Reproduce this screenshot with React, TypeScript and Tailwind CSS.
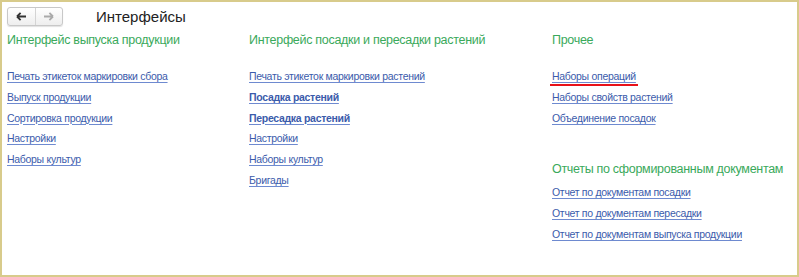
const font = { fontFamily: '"Liberation Sans", Arial, sans-serif' };

type Link = { label: string; bold?: boolean; marked?: boolean };

function LinkItem({ label, bold, marked }: Link) {
  return (
    <div className="relative h-[20.8px] leading-[20.8px]">
      <a href="#" className={`text-[10.5px] tracking-[-0.3px] text-[#3b5bab] underline underline-offset-2 decoration-[#6e8ad0] ${bold ? 'font-bold' : ''}`}>
        {label}
      </a>
      {marked && <div className="absolute left-[-2px] top-[19px] h-[2px] w-[88px] bg-[#e8121a]" />}
    </div>
  );
}

function Header({ title }: { title: string }) {
  return <h2 className="h-[20px] whitespace-nowrap text-[12.5px] tracking-[-0.3px] leading-[20px] text-[#3aa95b]">{title}</h2>;
}

function Section({ title, links }: { title: string; links: Link[] }) {
  return (
    <div>
      <Header title={title} />
      <div className="mt-[15px]">
        {links.map((l) => (
          <LinkItem key={l.label} {...l} />
        ))}
      </div>
    </div>
  );
}

export default function App() {
  return (
    <div style={font} className="h-[277px] w-[799px] border-2 border-[#d8cb8b] bg-white">
      <div className="mt-[5px] flex h-[19px] items-center pl-[5px]">
        <div className="flex h-[19px] w-[56px] rounded-[3px] border border-[#c8c8c8] bg-gradient-to-b from-white to-[#eeeeee] shadow-[0_1px_1px_rgba(0,0,0,0.12)]">
          <button className="flex flex-1 items-center justify-center border-r border-[#d4d4d4]">
            <svg width="11" height="9" viewBox="0 0 12 10"><path d="M1 5h10M1 5l4-4M1 5l4 4" stroke="#333" strokeWidth="2" fill="none" /></svg>
          </button>
          <button className="flex flex-1 items-center justify-center">
            <svg width="11" height="9" viewBox="0 0 12 10"><path d="M11 5H1M11 5L7 1M11 5L7 9" stroke="#aaa" strokeWidth="2" fill="none" /></svg>
          </button>
        </div>
        <div className="ml-[33px] text-[15px] leading-[19px] text-[#222]">Интерфейсы</div>
      </div>
      <div className="mt-[4px] flex pl-[5px]">
        <div className="w-[242px] shrink-0">
          <Section
            title="Интерфейс выпуска продукции"
            links={[
              { label: 'Печать этикеток маркировки сбора' },
              { label: 'Выпуск продукции' },
              { label: 'Сортировка продукции' },
              { label: 'Настройки' },
              { label: 'Наборы культур' },
            ]}
          />
        </div>
        <div className="w-[303px] shrink-0">
          <Section
            title="Интерфейс посадки и пересадки растений"
            links={[
              { label: 'Печать этикеток маркировки растений' },
              { label: 'Посадка растений', bold: true },
              { label: 'Пересадка растений', bold: true },
              { label: 'Настройки' },
              { label: 'Наборы культур' },
              { label: 'Бригады' },
            ]}
          />
        </div>
        <div className="shrink-0">
          <Section
            title="Прочее"
            links={[
              { label: 'Наборы операций', marked: true },
              { label: 'Наборы свойств растений' },
              { label: 'Объединение посадок' },
            ]}
          />
          <div className="mt-[32px]">
            <Header title="Отчеты по сформированным документам" />
            <div className="mt-[2px]">
              <LinkItem label="Отчет по документам посадки" />
              <LinkItem label="Отчет по документам пересадки" />
              <LinkItem label="Отчет по документам выпуска продукции" />
            </div>
          </div>
        </div>
      </div>
    </div>
  );
}
